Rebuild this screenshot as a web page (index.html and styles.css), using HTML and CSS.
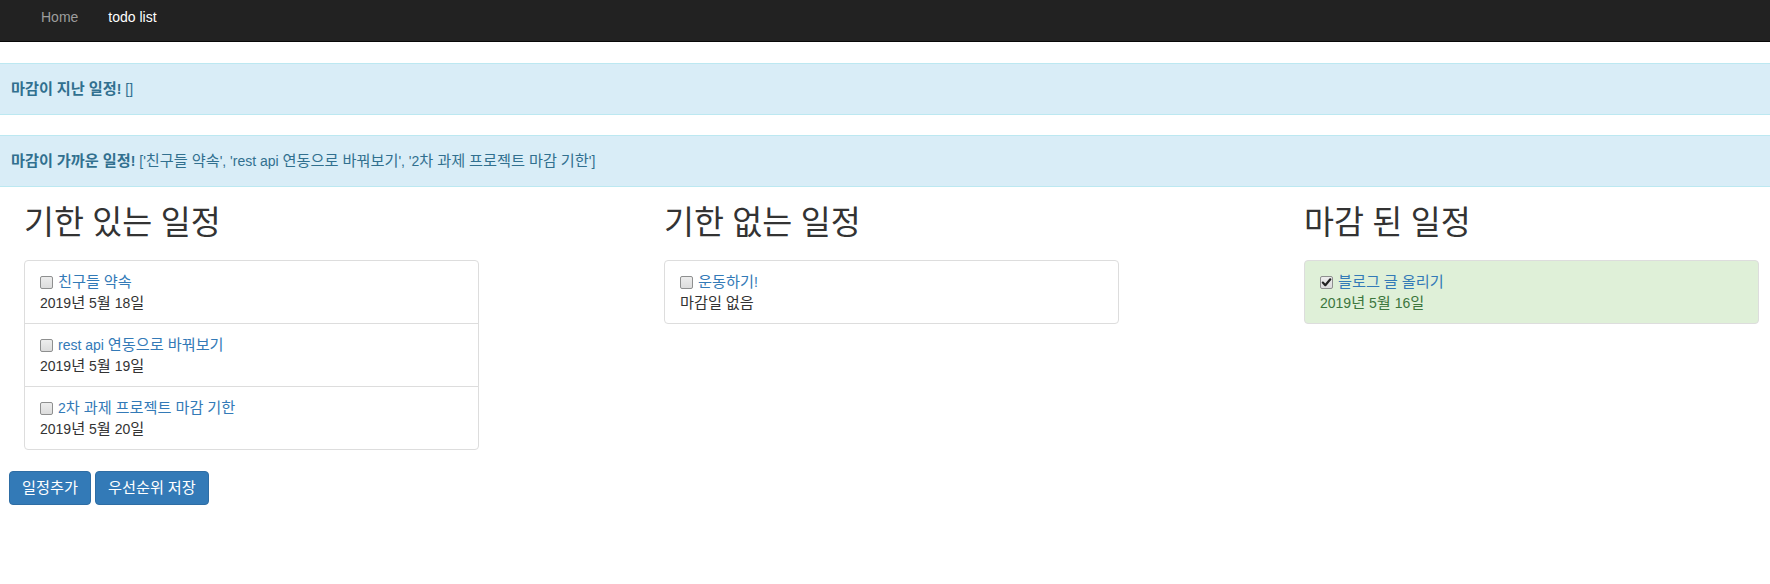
FILE: index.html
```html
<!DOCTYPE html>
<html lang="ko">
<head>
<meta charset="utf-8">
<title>todo list</title>
<link rel="stylesheet" href="styles.css">
</head>
<body>
<nav class="navbar">
  <ul class="nav">
    <li><a href="#" class="nav-link">Home</a></li>
    <li><a href="#" class="nav-link active">todo list</a></li>
  </ul>
</nav>
<main class="main">
  <div class="alert"><strong><span class="k">마감이</span> <span class="k">지난</span> <span class="k">일정</span>!</strong> []</div>
  <div class="alert"><strong><span class="k">마감이</span> <span class="k">가까운</span> <span class="k">일정</span>!</strong> ['<span class="k">친구들</span> <span class="k">약속</span>', 'rest api <span class="k">연동으로</span> <span class="k">바꿔보기</span>', '2<span class="k">차</span> <span class="k">과제</span> <span class="k">프로젝트</span> <span class="k">마감</span> <span class="k">기한</span>']</div>

  <div class="columns">
    <section class="col">
      <h2 class="col-title"><span class="k">기한</span> <span class="k">있는</span> <span class="k">일정</span></h2>
      <ul class="list-group">
        <li class="item">
          <div class="item-title"><span class="chk"></span><a href="#" class="item-link"><span class="k">친구들</span> <span class="k">약속</span></a></div>
          <div class="item-date">2019<span class="k">년</span> 5<span class="k">월</span> 18<span class="k">일</span></div>
        </li>
        <li class="item">
          <div class="item-title"><span class="chk"></span><a href="#" class="item-link">rest api <span class="k">연동으로</span> <span class="k">바꿔보기</span></a></div>
          <div class="item-date">2019<span class="k">년</span> 5<span class="k">월</span> 19<span class="k">일</span></div>
        </li>
        <li class="item">
          <div class="item-title"><span class="chk"></span><a href="#" class="item-link">2<span class="k">차</span> <span class="k">과제</span> <span class="k">프로젝트</span> <span class="k">마감</span> <span class="k">기한</span></a></div>
          <div class="item-date">2019<span class="k">년</span> 5<span class="k">월</span> 20<span class="k">일</span></div>
        </li>
      </ul>
    </section>
    <section class="col">
      <h2 class="col-title"><span class="k">기한</span> <span class="k">없는</span> <span class="k">일정</span></h2>
      <ul class="list-group">
        <li class="item">
          <div class="item-title"><span class="chk"></span><a href="#" class="item-link"><span class="k">운동하기</span>!</a></div>
          <div class="item-date"><span class="k">마감일</span> <span class="k">없음</span></div>
        </li>
      </ul>
    </section>
    <section class="col">
      <h2 class="col-title"><span class="k">마감</span> <span class="k">된</span> <span class="k">일정</span></h2>
      <ul class="list-group">
        <li class="item item-success">
          <div class="item-title"><span class="chk chk-on"><svg viewBox="0 0 13 13" width="13" height="13"><path d="M2.8 6.6 L5.3 9.2 L10.3 3.3" fill="none" stroke="#222" stroke-width="2.2" stroke-linecap="round" stroke-linejoin="round"/></svg></span><a href="#" class="item-link"><span class="k">블로그</span> <span class="k">글</span> <span class="k">올리기</span></a></div>
          <div class="item-date">2019<span class="k">년</span> 5<span class="k">월</span> 16<span class="k">일</span></div>
        </li>
      </ul>
    </section>
  </div>

  <div class="actions">
    <button class="btn"><span class="k">일정추가</span></button>
    <button class="btn"><span class="k">우선순위</span> <span class="k">저장</span></button>
  </div>
</main>
</body>
</html>
```

FILE: styles.css
```css
* { box-sizing: border-box; }

html, body {
  margin: 0;
  padding: 0;
}

body {
  font-family: "Liberation Sans", Arial, "Noto Sans CJK KR", sans-serif;
  font-size: 14px;
  line-height: 1.42857;
  color: #333;
  background: #fff;
}

a { text-decoration: none; }

.k {
  font-family: "Noto Sans CJK KR", sans-serif;
  font-size: 1.087em;
  line-height: 0;
}

.navbar {
  background: #222;
  border-bottom: 1px solid #080808;
  height: 42px;
}

.nav {
  list-style: none;
  margin: 0;
  padding: 0 0 0 26px;
  display: flex;
}

.nav-link {
  display: block;
  padding: 7px 15px;
  line-height: 20px;
  color: #9d9d9d;
}

.nav-link.active { color: #fff; }

.main {
  padding-top: 21px;
}

.alert {
  margin: 0 0 20px;
  padding: 15px 11px;
  line-height: 20px;
  background: #d9edf7;
  border-top: 1px solid #bce8f1;
  border-bottom: 1px solid #bce8f1;
  color: #31708f;
}

.alert strong { font-weight: 700; }

.columns {
  display: grid;
  grid-template-columns: repeat(3, 455px);
  column-gap: 185px;
  padding-left: 24px;
}

.col-title {
  margin: 0 0 20px;
  font-size: 30px;
  font-weight: 400;
  line-height: 33px;
  color: #333;
}

.list-group {
  list-style: none;
  margin: 0;
  padding: 0;
}

.item {
  padding: 10px 15px;
  border: 1px solid #ddd;
  margin-bottom: -1px;
  background: #fff;
}

.item:first-child {
  border-top-left-radius: 4px;
  border-top-right-radius: 4px;
}

.item:last-child {
  border-bottom-left-radius: 4px;
  border-bottom-right-radius: 4px;
  margin-bottom: 0;
}

.item-success {
  background: #dff0d8;
  color: #3c763d;
}

.item-title {
  display: flex;
  align-items: flex-start;
  line-height: 22px;
}

.chk {
  flex: none;
  width: 13px;
  height: 13px;
  margin: 5px 5px 0 0;
  border: 1px solid #8e8f8f;
  border-radius: 2px;
  background: linear-gradient(#ededed, #dcdcdc);
  display: flex;
  align-items: center;
  justify-content: center;
}

.chk svg {
  display: block;
  margin: -1px;
}

.item-link { color: #337ab7; }

.item-date {
  line-height: 20px;
}

.actions {
  display: flex;
  gap: 4px;
  padding: 21px 0 0 9px;
}

.btn {
  font-family: inherit;
  font-size: 14px;
  line-height: 20px;
  padding: 6px 12px;
  color: #fff;
  background: #337ab7;
  border: 1px solid #2e6da4;
  border-radius: 4px;
  cursor: pointer;
}
```
